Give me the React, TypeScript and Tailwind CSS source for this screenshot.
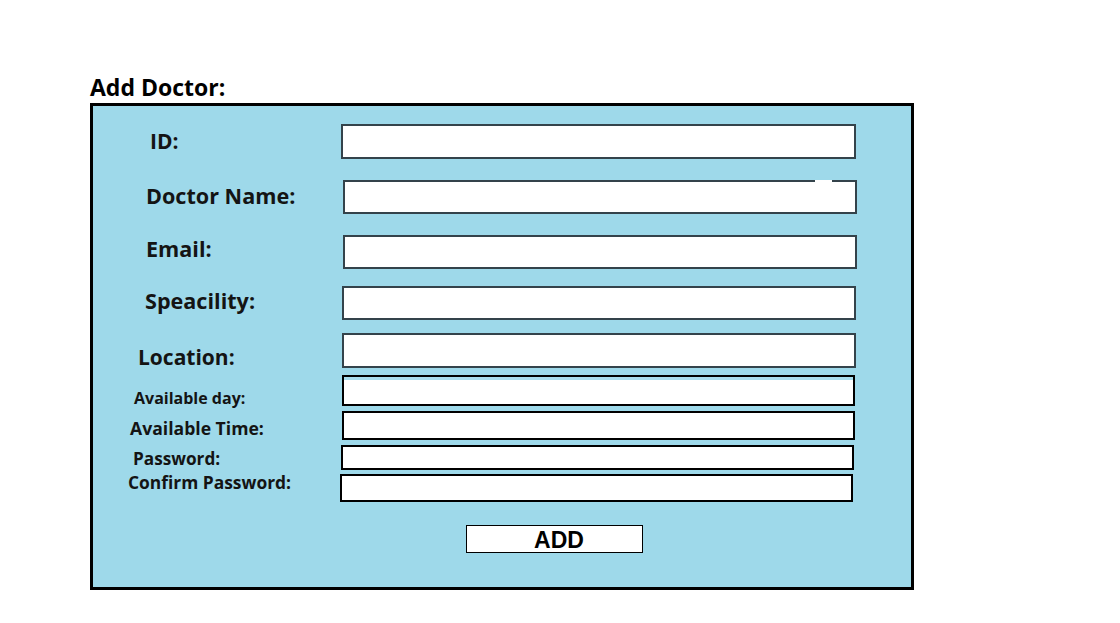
const fields = [
  { label: "ID:", row: "mt-[18px]", labelBox: "w-[248px] pl-[57px] text-[21px]", input: "w-[515px] h-[35px] border-2 border-[#34434b]", nudge: "" },
  { label: "Doctor Name:", row: "mt-[21px]", labelBox: "w-[250px] pl-[53px] text-[21.6px]", input: "w-[514px] h-[34px] border-2 border-[#34434b]", nudge: "-translate-y-[1px]", notch: true },
  { label: "Email:", row: "mt-[21px]", labelBox: "w-[250px] pl-[53px] text-[21.6px]", input: "w-[514px] h-[34px] border-2 border-[#34434b]", nudge: "-translate-y-[3px]" },
  { label: "Speacility:", row: "mt-[17px]", labelBox: "w-[249px] pl-[52px] text-[21.6px]", input: "w-[514px] h-[34px] border-2 border-[#34434b]", nudge: "-translate-y-[2px]" },
  { label: "Location:", row: "mt-[13px]", labelBox: "w-[249px] pl-[45px] text-[21px]", input: "w-[514px] h-[35px] border-2 border-[#34434b]", nudge: "translate-y-[7px]" },
  { label: "Available day:", row: "mt-[7px]", labelBox: "w-[249px] pl-[41px] text-[16px]", input: "w-[513px] h-[31px] border-2 border-black shadow-[inset_0_3px_0_#a9dded]", nudge: "translate-y-[7px]" },
  { label: "Available Time:", row: "mt-[5px]", labelBox: "w-[249px] pl-[37px] text-[17.6px]", input: "w-[513px] h-[29px] border-2 border-black", nudge: "translate-y-[3px]" },
  { label: "Password:", row: "mt-[5px]", labelBox: "w-[248px] pl-[40px] text-[17.2px]", input: "w-[513px] h-[25px] border-2 border-black", nudge: "translate-y-[1px]" },
  { label: "Confirm Password:", row: "mt-[4px]", labelBox: "w-[247px] pl-[35px] text-[17.4px]", input: "w-[513px] h-[28px] border-2 border-black", nudge: "-translate-y-[5px]" },
];

export default function App() {
  return (
    <main className="min-h-[623px] w-[1120px] bg-white pt-[72px] pl-[90px] font-['Open_Sans',sans-serif]">
      <h1 className="text-[23px] font-bold leading-[30px] text-black">Add Doctor:</h1>

      <form
        className="mt-[1px] w-[824px] border-[3px] border-black bg-[#9ed9ea] pb-[34px]"
        onSubmit={(e) => e.preventDefault()}
      >
        {fields.map((f) => (
          <div key={f.label} className={`flex items-center ${f.row}`}>
            <label className={`shrink-0 font-bold text-[#141414] leading-none ${f.labelBox} ${f.nudge}`}>
              {f.label}
            </label>
            <div className="relative">
              <input className={`block bg-white outline-none ${f.input}`} />
              {f.notch && <span className="absolute top-0 left-[472px] h-[2px] w-[17px] bg-white" />}
            </div>
          </div>
        ))}

        <div className="mt-[23px] pl-[373px]">
          <button
            type="submit"
            className="block h-[28px] w-[177px] border border-black bg-white pl-[9px] pt-[3px] text-[23px] font-bold leading-none text-black font-['Liberation_Sans',Arial,sans-serif]"
          >
            ADD
          </button>
        </div>
      </form>
    </main>
  );
}
